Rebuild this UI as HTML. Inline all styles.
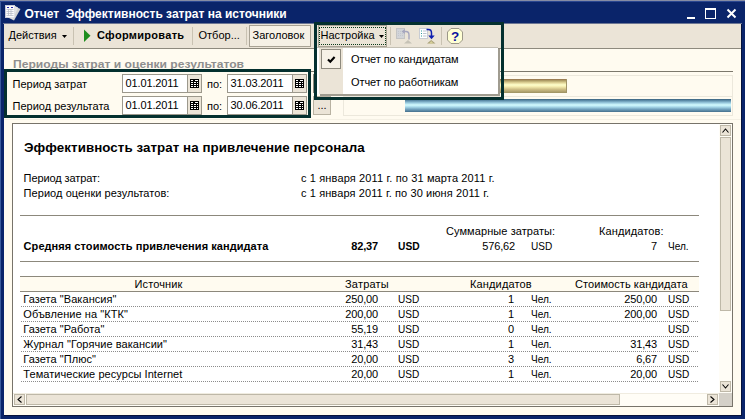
<!DOCTYPE html>
<html lang="ru">
<head>
<meta charset="utf-8">
<title>Отчет  Эффективность затрат на источники</title>
<style>
html,body{margin:0;padding:0;}
body{width:745px;height:419px;overflow:hidden;background:#0A246A;font-family:"Liberation Sans",sans-serif;font-size:11px;color:#000;position:relative;}
.a{position:absolute;white-space:nowrap;line-height:1;}
#win{left:0;top:0;width:745px;height:419px;background:#0A246A;}
#topedge{left:0;top:0;width:745px;height:2px;background:linear-gradient(180deg,#868CA4 0,#868CA4 50%,#2A4690 50%,#2A4690 100%);}
#leftedge{left:0;top:2px;width:1px;height:417px;background:#3A5A9C;}
#title{left:24.500px;top:8px;color:#fff;font-weight:bold;font-size:12px;}
#client{left:4px;top:24px;width:737px;height:391px;background:#FFFBF0;}
#toolbar{left:4px;top:24px;width:737px;height:24px;background:#EBE4D7;border-bottom:1px solid #8E8A7E;}
.tb{font-size:11px;top:30px;}
.sep{width:1px;background:#C9C2B2;top:27px;height:18px;}
.btn{border:1px solid #8E8A7E;background:#F6F1E6;box-sizing:border-box;}
#ghdr{left:13px;top:58.500px;font-weight:bold;color:#8E8E8E;font-size:11px;}
.teal{border:3px solid #04302F;box-sizing:border-box;}
.fld{box-sizing:border-box;border:1px solid #9C988C;background:#fff;height:19px;width:80px;}
.fld .t{left:2.500px;top:3px;font-size:11px;letter-spacing:-.12px;}
.fld .cb{left:64px;top:0;width:13px;height:17px;background:#EBE4D7;border-left:1px solid #9C988C;}
.fld svg{position:absolute;left:67px;top:4px;}
.lbl{font-size:11px;}
#rep{left:12px;top:123px;width:721px;height:284px;box-sizing:border-box;border:1px solid #77736A;background:#fff;}
.r{font-size:11px;}
.b{font-weight:bold;}
.hl{height:1px;background:#8C887C;left:20px;width:679px;}
.dl{height:1px;left:21px;width:678px;background-image:repeating-linear-gradient(90deg,#8c8c8c 0,#8c8c8c 1px,transparent 1px,transparent 2px);}
.rt{text-align:right;letter-spacing:-.15px;}
.u{transform:scaleX(.915);transform-origin:0 0;}
.sb{box-sizing:border-box;border:1px solid #BEB8A8;background:#EBE4D7;}
</style>
</head>
<body>
<div id="win" class="a"></div>
<div id="topedge" class="a"></div>
<div id="leftedge" class="a"></div>
<div id="title" class="a">Отчет&nbsp; Эффективность затрат на источники</div>
<div id="client" class="a"></div>
<div class="a" style="left:3px;top:23px;width:739px;height:1px;background:#6C7694"></div>
<div id="toolbar" class="a"></div>
<div class="a" style="left:4px;top:415px;width:738px;height:1px;background:#06123A"></div>
<div class="a" style="left:741px;top:24px;width:1px;height:392px;background:#06123A"></div>

<!-- window icon -->
<svg class="a" style="left:0;top:0" width="24" height="24" viewBox="0 0 24 24">
  <path d="M14 6L20.500 9L14 20.500L8 17.500z" fill="#D2D2D2"/>
  <path d="M14 5.500L18 7.500L13 19L8 17z" fill="#E4E4E4"/>
  <rect x="5.300" y="5.300" width="9.400" height="12.400" fill="#FBFBFB" stroke="#D4D4DC" stroke-width=".6"/>
  <rect x="7" y="7" width="2" height="1" fill="#2A2AA8"/><rect x="11" y="7" width="2" height="1" fill="#2A2AA8"/>
  <path d="M6.500 9.500h7M6.500 11.500h7M6.500 13.500h7M6.500 15.500h7M8.500 9v6.500M11 9v6.500" stroke="#B4B8C4" stroke-width=".7" fill="none"/>
</svg>
<!-- caption buttons -->
<div class="a" style="left:687px;top:17px;width:8px;height:2px;background:#fff"></div>
<div class="a" style="left:705px;top:8px;width:11px;height:11px;box-sizing:border-box;border:1px solid #fff;border-top-width:2px"></div>
<svg class="a" style="left:726px;top:8px" width="11" height="11" viewBox="0 0 11 11"><path d="M1.5 1.5L9.5 9.5M9.5 1.5L1.5 9.5" stroke="#fff" stroke-width="2" fill="none"/></svg>

<!-- toolbar items -->
<div class="a tb" style="left:8.500px">Действия</div>
<svg class="a" style="left:62px;top:35px" width="5" height="3" viewBox="0 0 5 3"><path d="M0 0h5L2.500 3z" fill="#000"/></svg>
<div class="a sep" style="left:73px"></div>
<svg class="a" style="left:84px;top:29px" width="8" height="14" viewBox="0 0 8 14"><path d="M0 .5L6.500 6.750L0 13z" fill="#1E8E1E"/></svg>
<div class="a tb b" style="left:97px;letter-spacing:.3px">Сформировать</div>
<div class="a sep" style="left:192px"></div>
<div class="a tb" style="left:198.500px">Отбор...</div>
<div class="a sep" style="left:246px"></div>
<div class="a btn" style="left:249px;top:25px;width:62px;height:22px;border-color:#A8A294"></div>
<div class="a tb" style="left:252.500px">Заголовок</div>

<!-- toolbar right part: Настройка + icons -->
<div class="a" style="left:318px;top:25px;width:69px;height:22px;box-sizing:border-box;border:1px solid #A8A294;background:#EBE4D7"></div>
<div class="a" style="left:319px;top:27px;width:67px;height:18px;box-sizing:border-box;border:1px dotted #0A3A1A"></div>
<div class="a tb" style="left:320.500px">Настройка</div>
<svg class="a" style="left:379px;top:35px" width="5" height="3" viewBox="0 0 5 3"><path d="M0 0h5L2.500 3z" fill="#000"/></svg>
<div class="a sep" style="left:390px"></div>
<!-- toolbar icons -->
<svg class="a" style="left:390px;top:24px" width="80" height="24" viewBox="390 24 80 24">
  <!-- icon 1 disabled -->
  <rect x="396.500" y="28.500" width="8" height="10" fill="#D2D4D8" stroke="#C4C4C4" stroke-width="1"/>
  <path d="M398 31.500h5M398 33.500h5M398 35.500h5" stroke="#C2C6CE" stroke-width="1" stroke-dasharray="1 1"/>
  <path d="M403.500 31.500h2.500Q409 31.500 409 35V39.500" stroke="#A6A6BE" stroke-width="1.400" fill="none"/>
  <path d="M404.800 29L401.600 31.500L404.800 34z" fill="#A6A6BE"/>
  <path d="M404 43.500h8L408 40z" fill="#C6C2B6"/>
  <!-- icon 2 -->
  <rect x="419.500" y="28.500" width="8" height="10" fill="#FFFFFF" stroke="#C8CCD4" stroke-width="1"/>
  <path d="M421 31h1M421 33.500h1M421 36h1" stroke="#2C9C9C" stroke-width="1.200"/>
  <path d="M423 31h3.500M423 33.500h3.500M423 36h3.500" stroke="#BCC4D0" stroke-width="1"/>
  <path d="M426.500 29.500h2Q431.500 29.500 431.500 33V37" stroke="#1020B0" stroke-width="1.500" fill="none"/>
  <path d="M428.300 35.500h6.400L431.500 39.300z" fill="#1020B0"/>
  <path d="M427 43.500h8.500L431.200 40z" fill="#A8A078"/>
  <path d="M429 43.500h4.500L431.200 41z" fill="#D8D098"/>
  <!-- help -->
  <path d="M451 28.500h8L462.500 32v8L459 43.500h-8L447.500 40v-8z" fill="#FFFFD4" stroke="#9C9888" stroke-width="1"/>
  <text x="455" y="41" text-anchor="middle" font-family="Liberation Sans, sans-serif" font-weight="bold" font-size="13.500" fill="#0C14A0">?</text>
</svg>
<div class="a sep" style="left:441px"></div>

<!-- group header -->
<div id="ghdr" class="a" style="transform:scaleX(1.1);transform-origin:0 0">Периоды затрат и оценки результатов</div>
<div class="a" style="left:248px;top:71px;width:485px;height:1px;background:#7C786C"></div>

<!-- second row small button hidden behind -->
<div class="a btn" style="left:313px;top:74px;width:18px;height:19px;background:#EBE4D7"></div>
<div class="a btn" style="left:313px;top:96px;width:18px;height:19px;background:#EBE4D7;border-color:#B8B2A2"></div>
<div class="a" style="left:317.500px;top:100px;font-size:11px">...</div>

<!-- period fields -->
<div class="a lbl" style="left:12.500px;top:79px">Период затрат</div>
<div class="a lbl" style="left:12.500px;top:101px">Период результата</div>
<div class="a fld" style="left:122px;top:74px"><div class="a t">01.01.2011</div><div class="a cb"></div><svg width="9" height="9" viewBox="0 0 9 9" shape-rendering="crispEdges"><rect width="9" height="9" fill="#000"/><path d="M1 1.500h2M5 1.500h3M1 3.500h2M4 3.500h2M7 3.500h1M1 5.500h2M4 5.500h2M7 5.500h1M1 7.500h2M4 7.500h2M7 7.500h1" stroke="#fff" stroke-width="1"/></svg></div>
<div class="a fld" style="left:122px;top:96px"><div class="a t">01.01.2011</div><div class="a cb"></div><svg width="9" height="9" viewBox="0 0 9 9" shape-rendering="crispEdges"><rect width="9" height="9" fill="#000"/><path d="M1 1.500h2M5 1.500h3M1 3.500h2M4 3.500h2M7 3.500h1M1 5.500h2M4 5.500h2M7 5.500h1M1 7.500h2M4 7.500h2M7 7.500h1" stroke="#fff" stroke-width="1"/></svg></div>
<div class="a lbl" style="left:207px;top:79px">по:</div>
<div class="a lbl" style="left:207px;top:101px">по:</div>
<div class="a fld" style="left:227px;top:74px"><div class="a t">31.03.2011</div><div class="a cb"></div><svg width="9" height="9" viewBox="0 0 9 9" shape-rendering="crispEdges"><rect width="9" height="9" fill="#000"/><path d="M1 1.500h2M5 1.500h3M1 3.500h2M4 3.500h2M7 3.500h1M1 5.500h2M4 5.500h2M7 5.500h1M1 7.500h2M4 7.500h2M7 7.500h1" stroke="#fff" stroke-width="1"/></svg></div>
<div class="a fld" style="left:227px;top:96px"><div class="a t">30.06.2011</div><div class="a cb"></div><svg width="9" height="9" viewBox="0 0 9 9" shape-rendering="crispEdges"><rect width="9" height="9" fill="#000"/><path d="M1 1.500h2M5 1.500h3M1 3.500h2M4 3.500h2M7 3.500h1M1 5.500h2M4 5.500h2M7 5.500h1M1 7.500h2M4 7.500h2M7 7.500h1" stroke="#fff" stroke-width="1"/></svg></div>
<div class="a teal" style="left:4px;top:69px;width:307px;height:49px"></div>

<!-- chart strip -->
<div class="a" style="left:343px;top:75px;width:390px;height:41px;box-sizing:border-box;border:1px solid #ECE8DC"></div>
<div class="a" style="left:343px;top:96px;width:390px;height:1px;background:#ECE8DC"></div>
<div class="a" style="left:4px;top:119px;width:737px;height:1px;background:#F4F0E4"></div>
<div class="a" style="left:405px;top:79px;width:162px;height:14px;box-sizing:border-box;border-right:1px solid #A09468;background:linear-gradient(180deg,#94704C 0,#B0A068 12%,#E4D89C 28%,#FFFFCC 42%,#F4ECB0 55%,#CCBC84 75%,#9C9060 100%)"></div>
<div class="a" style="left:405px;top:99px;width:326px;height:13px;background:linear-gradient(180deg,#38607C 0,#5C8CA8 12%,#9CCCE0 30%,#D4FCFF 46%,#ACDCEC 60%,#70A0BC 80%,#446F8C 100%)"></div>

<!-- dropdown menu -->
<div class="a" style="left:320px;top:49px;width:179.500px;height:46.500px;background:#A09C90"></div>
<div class="a" style="left:317px;top:47px;width:181px;height:47px;background:#fff;box-sizing:border-box;border-top:1px solid #C4C0B4"></div>
<div class="a" style="left:319px;top:48px;width:24px;height:46px;background:#EBE4D7"></div>
<div class="a" style="left:321px;top:49px;width:20px;height:20px;box-sizing:border-box;border:1px solid #8E8A7E;background:#F6F1E6"></div>
<svg class="a" style="left:327px;top:55px" width="9" height="9" viewBox="0 0 9 9"><path d="M1 4.500L3.300 6.800L7.600 2" stroke="#000" stroke-width="2.100" fill="none"/></svg>
<div class="a tb" style="left:351px;top:54px;letter-spacing:-.08px">Отчет по кандидатам</div>
<div class="a tb" style="left:351px;top:77px;letter-spacing:-.08px">Отчет по работникам</div>
<div class="a teal" style="left:314px;top:22px;width:190px;height:78px"></div>

<!-- report -->
<div id="rep" class="a"></div>
<div class="a b" style="left:24px;top:141px;font-size:13.33px;letter-spacing:.07px">Эффективность затрат на привлечение персонала</div>
<div class="a r" style="left:23.600px;top:173px;letter-spacing:-.1px">Период затрат:</div>
<div class="a r" style="left:301px;top:173px;letter-spacing:.135px">с 1 января 2011 г. по 31 марта 2011 г.</div>
<div class="a r" style="left:23.600px;top:188px;letter-spacing:.06px">Период оценки результатов:</div>
<div class="a r" style="left:301px;top:188px;letter-spacing:.1px">с 1 января 2011 г. по 30 июня 2011 г.</div>
<div class="a hl" style="top:215px"></div>
<div class="a r" style="left:446px;top:226px;letter-spacing:.08px">Суммарные затраты:</div>
<div class="a r" style="left:599px;top:226px;letter-spacing:.11px">Кандидатов:</div>
<div class="a r b" style="left:23.600px;top:241px;letter-spacing:.06px">Средняя стоимость привлечения кандидата</div>
<div class="a r b rt" style="left:300px;width:78px;top:241px">82,37</div>
<div class="a r b u" style="left:398px;top:241px;transform:scaleX(.93)">USD</div>
<div class="a r rt" style="left:437px;width:78px;top:241px">576,62</div>
<div class="a r u" style="left:531.3px;top:241px">USD</div>
<div class="a r rt" style="left:579px;width:78px;top:241px">7</div>
<div class="a r u" style="left:668.3px;top:241px">Чел.</div>
<div class="a hl" style="top:261px"></div>
<div class="a hl" style="top:276px"></div>
<div class="a" style="left:20px;top:277px;width:679px;height:14px;background:#FFFBF0"></div>
<div class="a hl" style="top:291px"></div>
<div class="a r" style="left:19px;width:279px;text-align:center;top:279px;letter-spacing:.1px">Источник</div>
<div class="a r" style="left:345px;top:279px;letter-spacing:.2px">Затраты</div>
<div class="a r" style="left:470px;top:279px;letter-spacing:.15px">Кандидатов</div>
<div class="a r" style="left:575px;top:279px;letter-spacing:.07px">Стоимость кандидата</div>
<div class="a r" style="left:23.300px;top:294px;letter-spacing:.06px">Газета &quot;Вакансия&quot;</div><div class="a r rt" style="left:300px;width:78px;top:294px">250,00</div><div class="a r u" style="left:398.3px;top:294px">USD</div><div class="a r rt" style="left:437px;width:77px;top:294px">1</div><div class="a r u" style="left:531px;top:294px">Чел.</div><div class="a r rt" style="left:579px;width:78px;top:294px">250,00</div><div class="a r u" style="left:668.3px;top:294px">USD</div>
<div class="a dl" style="top:306px"></div>
<div class="a r" style="left:23.300px;top:309px;letter-spacing:.06px">Объвление на &quot;КТК&quot;</div><div class="a r rt" style="left:300px;width:78px;top:309px">200,00</div><div class="a r u" style="left:398.3px;top:309px">USD</div><div class="a r rt" style="left:437px;width:77px;top:309px">1</div><div class="a r u" style="left:531px;top:309px">Чел.</div><div class="a r rt" style="left:579px;width:78px;top:309px">200,00</div><div class="a r u" style="left:668.3px;top:309px">USD</div>
<div class="a dl" style="top:321px"></div>
<div class="a r" style="left:23.300px;top:324px;letter-spacing:.06px">Газета &quot;Работа&quot;</div><div class="a r rt" style="left:300px;width:78px;top:324px">55,19</div><div class="a r u" style="left:398.3px;top:324px">USD</div><div class="a r rt" style="left:437px;width:77px;top:324px">0</div><div class="a r u" style="left:531px;top:324px">Чел.</div><div class="a r rt" style="left:579px;width:78px;top:324px"></div><div class="a r u" style="left:668.3px;top:324px">USD</div>
<div class="a dl" style="top:336px"></div>
<div class="a r" style="left:23.300px;top:339px;letter-spacing:.06px">Журнал &quot;Горячие вакансии&quot;</div><div class="a r rt" style="left:300px;width:78px;top:339px">31,43</div><div class="a r u" style="left:398.3px;top:339px">USD</div><div class="a r rt" style="left:437px;width:77px;top:339px">1</div><div class="a r u" style="left:531px;top:339px">Чел.</div><div class="a r rt" style="left:579px;width:78px;top:339px">31,43</div><div class="a r u" style="left:668.3px;top:339px">USD</div>
<div class="a dl" style="top:351px"></div>
<div class="a r" style="left:23.300px;top:354px;letter-spacing:.06px">Газета &quot;Плюс&quot;</div><div class="a r rt" style="left:300px;width:78px;top:354px">20,00</div><div class="a r u" style="left:398.3px;top:354px">USD</div><div class="a r rt" style="left:437px;width:77px;top:354px">3</div><div class="a r u" style="left:531px;top:354px">Чел.</div><div class="a r rt" style="left:579px;width:78px;top:354px">6,67</div><div class="a r u" style="left:668.3px;top:354px">USD</div>
<div class="a dl" style="top:366px"></div>
<div class="a r" style="left:23.300px;top:369px;letter-spacing:.06px">Тематические ресурсы Internet</div><div class="a r rt" style="left:300px;width:78px;top:369px">20,00</div><div class="a r u" style="left:398.3px;top:369px">USD</div><div class="a r rt" style="left:437px;width:77px;top:369px">1</div><div class="a r u" style="left:531px;top:369px">Чел.</div><div class="a r rt" style="left:579px;width:78px;top:369px">20,00</div><div class="a r u" style="left:668.3px;top:369px">USD</div>
<div class="a dl" style="top:381px"></div>

<!-- scrollbars -->
<div class="a" style="left:719px;top:124px;width:13px;height:269px;background:#FFFDF6"></div>
<div class="a sb" style="left:720px;top:125px;width:11px;height:11px"></div>
<svg class="a" style="left:722px;top:128px" width="7" height="5" viewBox="0 0 7 5"><path d="M.5 4.500L3.500 1L6.500 4.500" stroke="#000" stroke-width="1.050" fill="none"/></svg>
<div class="a sb" style="left:720px;top:137px;width:11px;height:174px"></div>
<div class="a sb" style="left:720px;top:381px;width:11px;height:11px"></div>
<svg class="a" style="left:722px;top:384px" width="7" height="5" viewBox="0 0 7 5"><path d="M.5 .5L3.500 4L6.500 .5" stroke="#000" stroke-width="1.050" fill="none"/></svg>
<div class="a" style="left:13px;top:393px;width:706px;height:13px;background:#FFFDF6;border-top:1px solid #F0ECE0;box-sizing:border-box"></div>
<div class="a sb" style="left:14px;top:394px;width:11px;height:11px"></div>
<svg class="a" style="left:17px;top:396px" width="5" height="7" viewBox="0 0 5 7"><path d="M4.500 .5L1 3.500L4.500 6.500" stroke="#000" stroke-width="1.050" fill="none"/></svg>
<div class="a sb" style="left:26px;top:394px;width:594px;height:11px"></div>
<div class="a sb" style="left:707px;top:394px;width:11px;height:11px"></div>
<svg class="a" style="left:710px;top:396px" width="5" height="7" viewBox="0 0 5 7"><path d="M.5 .5L4 3.500L.5 6.500" stroke="#000" stroke-width="1.050" fill="none"/></svg>
<div class="a" style="left:719px;top:393px;width:13px;height:13px;background:#D4D0C8"></div>
</body>
</html>
